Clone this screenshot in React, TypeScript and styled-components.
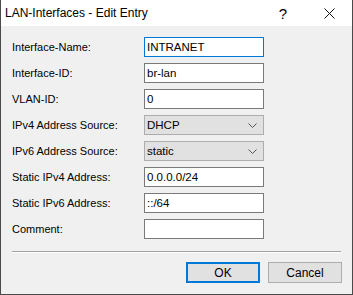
import React from "react";
import styled, { createGlobalStyle } from "styled-components";

const Global = createGlobalStyle`
  html, body { margin: 0; padding: 0; background: #f0f0f0; }
  * { box-sizing: border-box; }
`;

const Window = styled.div`
  width: 353px;
  height: 295px;
  border: 1px solid #4a4a4a;
  border-top: none;
  background: #f0f0f0;
  display: flex;
  flex-direction: column;
  font-family: "Liberation Sans", Arial, sans-serif;
  font-size: 11px;
  color: #000;
`;

const TitleBar = styled.div`
  height: 26px;
  background: #fff;
  display: flex;
  align-items: center;
  padding-left: 4px;
  font-size: 12px;
`;

const TitleText = styled.div`
  flex: 1;
`;

const TitleButton = styled.div`
  width: 46px;
  height: 26px;
  display: flex;
  align-items: center;
  justify-content: center;
  font-size: 15px;
`;

const Form = styled.div`
  display: grid;
  grid-template-columns: 132px 120px;
  grid-auto-rows: 20px;
  row-gap: 6px;
  padding: 11px 0 0 11px;
  align-items: center;
`;

const Label = styled.div`
  line-height: 20px;
`;

const TextBox = styled.div<{ $focused?: boolean }>`
  height: 20px;
  border: 1px solid ${(p) => (p.$focused ? "#0078d7" : "#7a7a7a")};
  background: #fff;
  padding: 0 2px;
  line-height: 18px;
  font-size: 11.5px;
  white-space: nowrap;
  overflow: hidden;
`;

const Select = styled.div`
  height: 20px;
  border: 1px solid #adadad;
  background: #e1e1e1;
  padding: 0 6px 0 2px;
  line-height: 18px;
  font-size: 11.5px;
  display: flex;
  align-items: center;
  justify-content: space-between;
`;

const Separator = styled.div`
  margin: 12px 11px 0 11px;
  height: 2px;
  border-top: 1px solid #a0a0a0;
  border-bottom: 1px solid #fff;
`;

const ButtonRow = styled.div`
  display: flex;
  justify-content: flex-end;
  gap: 8px;
  padding: 9px 10px 0 0;
`;

const Button = styled.div<{ $default?: boolean }>`
  width: 74px;
  height: 21px;
  background: #e1e1e1;
  border: ${(p) => (p.$default ? "2px solid #0078d7" : "1px solid #adadad")};
  display: flex;
  align-items: center;
  justify-content: center;
  font-size: 12px;
`;

const Chevron = () => (
  <svg width="9" height="5" viewBox="0 0 9 5">
    <polyline points="0.5,0.5 4.5,4.5 8.5,0.5" fill="none" stroke="#555" strokeWidth="1" />
  </svg>
);

const CloseIcon = () => (
  <svg width="11" height="11" viewBox="0 0 11 11">
    <line x1="0.5" y1="0.5" x2="10.5" y2="10.5" stroke="#111" strokeWidth="1" />
    <line x1="10.5" y1="0.5" x2="0.5" y2="10.5" stroke="#111" strokeWidth="1" />
  </svg>
);

type Field =
  | { label: string; kind: "text"; value: string; focused?: boolean }
  | { label: string; kind: "select"; value: string };

const fields: Field[] = [
  { label: "Interface-Name:", kind: "text", value: "INTRANET", focused: true },
  { label: "Interface-ID:", kind: "text", value: "br-lan" },
  { label: "VLAN-ID:", kind: "text", value: "0" },
  { label: "IPv4 Address Source:", kind: "select", value: "DHCP" },
  { label: "IPv6 Address Source:", kind: "select", value: "static" },
  { label: "Static IPv4 Address:", kind: "text", value: "0.0.0.0/24" },
  { label: "Static IPv6 Address:", kind: "text", value: "::/64" },
  { label: "Comment:", kind: "text", value: "" },
];

export default function App() {
  return (
    <>
      <Global />
      <Window>
        <TitleBar>
          <TitleText>LAN-Interfaces - Edit Entry</TitleText>
          <TitleButton>?</TitleButton>
          <TitleButton>
            <CloseIcon />
          </TitleButton>
        </TitleBar>
        <Form>
          {fields.map((f) => (
            <React.Fragment key={f.label}>
              <Label>{f.label}</Label>
              {f.kind === "select" ? (
                <Select>
                  <span>{f.value}</span>
                  <Chevron />
                </Select>
              ) : (
                <TextBox $focused={f.focused}>{f.value}</TextBox>
              )}
            </React.Fragment>
          ))}
        </Form>
        <Separator />
        <ButtonRow>
          <Button $default>OK</Button>
          <Button>Cancel</Button>
        </ButtonRow>
      </Window>
    </>
  );
}
